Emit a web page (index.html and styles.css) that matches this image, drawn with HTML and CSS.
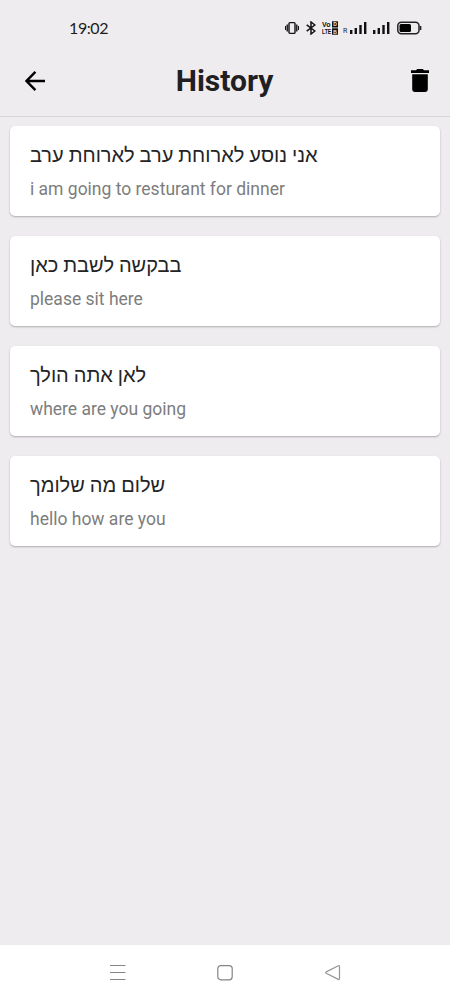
FILE: index.html
```
<!DOCTYPE html>
<html lang="en">
<head>
<meta charset="utf-8">
<title>History</title>
<link rel="stylesheet" href="styles.css">
</head>
<body>
<div class="screen">
  <div class="status">
    <span class="clock">19:02</span>
    <div class="status-icons">
      <svg class="vibrate" width="14" height="14" viewBox="0 0 14 14" fill="none" stroke="#111" stroke-width="1.4"><rect x="4" y="1.6" width="6" height="10.8" rx="1"/><path d="M2.200 3.500v7M11.800 3.500v7"/><path stroke-width="1" d="M.5 5v4M13.500 5v4"/></svg>
      <svg class="bluetooth" width="10" height="14" viewBox="0 0 10 14" fill="none" stroke="#111" stroke-width="1.500"><path d="M.7 3.8l8.2 6.2L5 13V1l3.900 3L.7 10.200"/></svg>
      <svg class="volte" width="16" height="14" viewBox="0 0 16 14"><rect x="10" y=".3" width="6" height="6.200" fill="#111"/><rect x="10" y="7.300" width="6" height="6.400" fill="#111"/><g font-family="Liberation Sans, sans-serif" font-weight="700" fill="#111"><text x="0" y="6" font-size="7">Vo</text><text transform="translate(0 13.300) scale(1 1.350)" font-size="5.100">LTE</text></g><g font-family="Liberation Sans, sans-serif" font-weight="700" font-size="5" fill="#efecf0"><text x="11.200" y="5.100">D</text><text x="11.200" y="12.600">B</text></g></svg>
      <span class="roam">R</span>
      <svg class="signal" width="17" height="14" viewBox="0 0 17 14" fill="#111"><rect x="0" y="9" width="2.400" height="4"/><rect x="4.600" y="7" width="2.400" height="6"/><rect x="9.300" y="4" width="2.400" height="9"/><rect x="14" y="1" width="2.400" height="12"/></svg>
      <svg class="signal second" width="17" height="14" viewBox="0 0 17 14" fill="#111"><rect x="0" y="9" width="2.400" height="4"/><rect x="4.600" y="7" width="2.400" height="6"/><rect x="9.300" y="4" width="2.400" height="9"/><rect x="14" y="1" width="2.400" height="12"/></svg>
      <svg class="battery" width="25" height="14" viewBox="0 0 25 14"><rect x=".8" y="1.300" width="21.200" height="11.400" rx="3.500" fill="none" stroke="#222" stroke-width="1.500"/><rect x="2.500" y="3" width="11.500" height="8" rx="1.500"/><path d="M23.600 5v4" stroke="#222" stroke-width="1.500"/></svg>
    </div>
  </div>
  <header class="bar">
    <svg width="20" height="20" viewBox="0 0 20 20" fill="none" stroke="#000" stroke-width="2.400"><path d="M20 10H2M10.400 .9L1.500 10l8.900 9.100"/></svg>
    <h1>History</h1>
    <svg width="18" height="23" viewBox="0 0 18 23"><path d="M0 1.200h5L6.200 0h5.600L13 1.200h5v2.700H0zM1.200 5.200h15.600v15.400a2.400 2.400 0 0 1-2.400 2.400H3.600a2.400 2.400 0 0 1-2.400-2.400z"/></svg>
  </header>
  <main class="list">
    <article class="card"><p class="he" lang="he" dir="rtl">אני נוסע לארוחת ערב לארוחת ערב</p><p class="en">i am going to resturant for dinner</p></article>
    <article class="card"><p class="he" lang="he" dir="rtl">בבקשה לשבת כאן</p><p class="en">please sit here</p></article>
    <article class="card"><p class="he" lang="he" dir="rtl">לאן אתה הולך</p><p class="en">where are you going</p></article>
    <article class="card"><p class="he" lang="he" dir="rtl">שלום מה שלומך</p><p class="en">hello how are you</p></article>
  </main>
  <nav class="nav">
    <svg width="16" height="16" viewBox="0 0 16 16" stroke="#858585" stroke-width="1.200"><path d="M0 .5h15.500M0 7.500h15.500M0 14.500h15.500"/></svg>
    <svg width="16" height="16" viewBox="0 0 16 16" fill="none" stroke="#858585" stroke-width="1.200"><rect x=".8" y=".6" width="14.400" height="14.200" rx="3"/></svg>
    <svg width="16" height="16" viewBox="0 0 16 16" fill="none" stroke="#969696" stroke-width="1.200"><path d="M1.200 6.900L13.300.8Q14.500.3 14.500 1.600V13.600Q14.500 14.900 13.300 14.400L1.200 8.300Q0 7.600 1.200 6.900z"/></svg>
  </nav>
</div>
</body>
</html>
```
FILE: styles.css
```
* { box-sizing: border-box; }
body { margin: 0; font-family: Roboto, sans-serif; }
.screen { width: 450px; height: 1000px; display: flex; flex-direction: column; background: #efecf0; }
.status { height: 46px; padding: 11px 28px 0 69px; display: flex; justify-content: space-between; align-items: flex-start; color: #1c1c1c; }
.clock { font: 16px/34px Lato, sans-serif; letter-spacing: -.4px; }
.status-icons { height: 34px; display: flex; align-items: center; }
.status-icons svg { display: block; flex: none; }
.bluetooth { margin-left: 7px; }
.volte { margin-left: 6px; }
.roam { width: 7px; font-size: 7px; margin: 6px 0 0 5px; }
.second { margin-left: 6px; }
.battery { margin-left: 7px; }
.bar { height: 71px; padding: 0 21px 1px 25px; border-bottom: 1px solid #d8d5d9; display: grid; grid-template-columns: 20px 1fr 18px; align-items: center; }
.bar h1 { margin: 0; padding-right: 7px; text-align: center; font-size: 30px; line-height: 40px; font-weight: 700; color: #202023; }
.list { flex: 1; padding: 9px 10px; display: flex; flex-direction: column; gap: 20px; }
.card { height: 90px; padding: 14px 20px; border-radius: 5px; background: #fff; box-shadow: 0 1px 2px rgba(0,0,0,.28); }
.card p { margin: 0; white-space: nowrap; }
.he { width: max-content; font: 20px/30px "Liberation Sans", sans-serif; word-spacing: -.6px; color: #242426; }
.card .en { padding-top: 7px; font-size: 17.5px; line-height: 24px; color: #7d7d7d; }
.nav { height: 55px; padding: 0 109.5px; background: #fff; display: flex; align-items: center; justify-content: space-between; }
```
